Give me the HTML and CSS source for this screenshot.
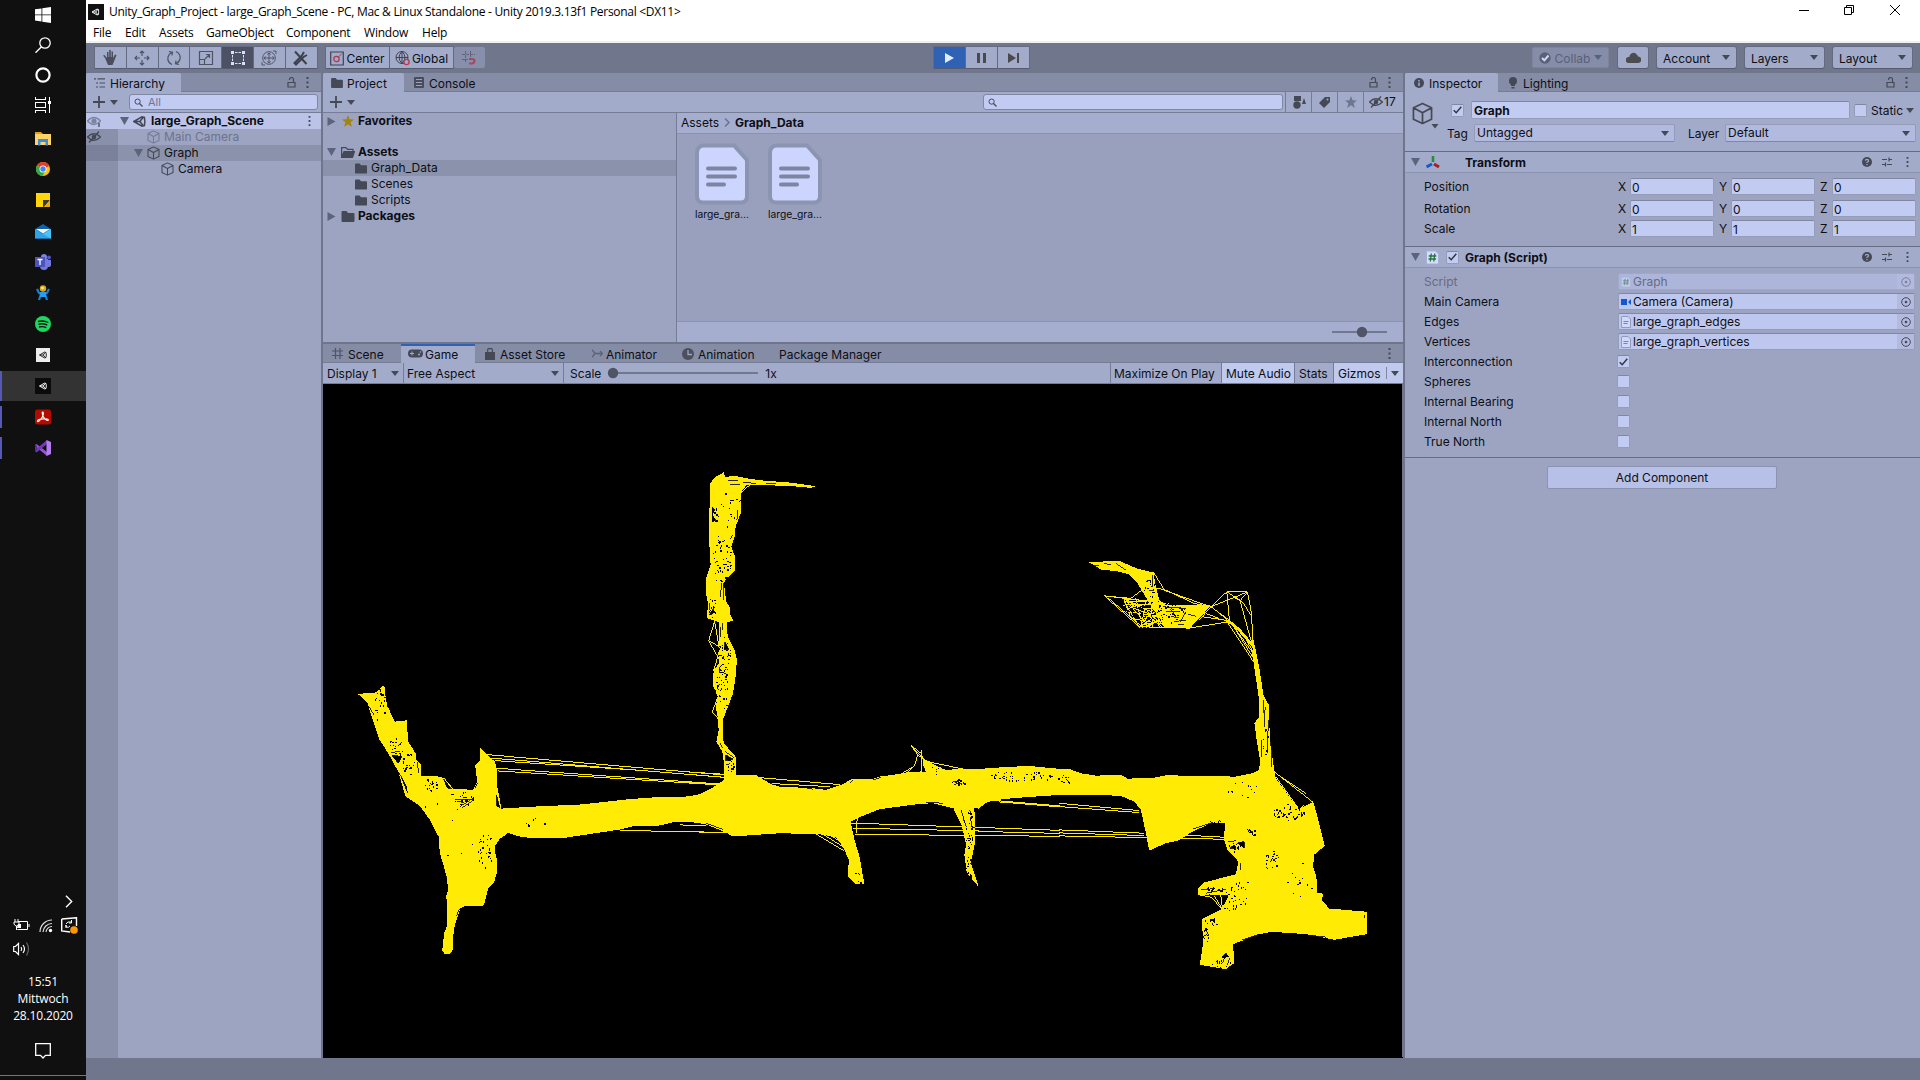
FILE: index.html
```html
<!DOCTYPE html>
<html lang="en">
<head>
<meta charset="utf-8">
<title>Unity_Graph_Project</title>
<link rel="stylesheet" href="styles.css">
</head>
<body>
<svg class="defs" width="0" height="0">
  <symbol id="unity" viewBox="0 0 16 16"><path d="M1 8 11 2.2 14 3 14.6 8 14 13 11 13.8ZM8.5 8H1.5M8.5 8 12.8 2.5M8.5 8 12.8 13.5" fill="none" stroke="currentColor" stroke-width="1.9"/></symbol>
  <symbol id="cube" viewBox="0 0 16 16"><path d="M8 1 14.3 4V12L8 15 1.7 12V4ZM1.7 4 8 7.5 14.3 4M8 7.5V15" fill="none" stroke="currentColor" stroke-width="1.2" stroke-linejoin="round"/></symbol>
  <symbol id="folder" viewBox="0 0 13 11"><path d="M0 1Q0 0 1 0H5L6.5 2H12Q13 2 13 3V10Q13 11 12 11H1Q0 11 0 10Z" fill="currentColor"/></symbol>
  <symbol id="lock" viewBox="0 0 9 11"><path d="M1 5.5H8V10H1ZM2.5 3V2.5A2 2 0 0 1 6.5 2.5V5.5" fill="none" stroke="currentColor" stroke-width="1.2"/></symbol>
  <symbol id="dots" viewBox="0 0 3 11"><path d="M.5 0h2v2h-2zM.5 4.5h2v2h-2zM.5 9h2v2h-2z" fill="currentColor"/></symbol>
  <symbol id="down" viewBox="0 0 8 5"><path d="M0 0H8L4 5Z" fill="currentColor"/></symbol>
  <symbol id="open" viewBox="0 0 9 8"><path d="M0 0H9L4.5 8Z" fill="currentColor"/></symbol>
  <symbol id="shut" viewBox="0 0 8 9"><path d="M0 0V9L8 4.5Z" fill="currentColor"/></symbol>
  <symbol id="plus" viewBox="0 0 12 12"><path d="M6 0V12M0 6H12" stroke="currentColor" stroke-width="1.8"/></symbol>
  <symbol id="mag" viewBox="0 0 9 9"><path d="M5.5 5.5 8.5 8.5" stroke="currentColor" stroke-width="1.3"/><circle cx="3.6" cy="3.6" r="2.6" fill="none" stroke="currentColor"/></symbol>
  <symbol id="star" viewBox="0 0 12 12"><path d="M6 0 7.6 4.2 12 4.5 8.6 7.3 9.8 12 6 9.3 2.2 12 3.4 7.3 0 4.5 4.4 4.2Z" fill="currentColor"/></symbol>
  <symbol id="eyeoff" viewBox="0 0 14 12"><path d="M.5 6Q7 -.5 13.500 6Q7 12.500 .5 6ZM12 .5 2 11.500" fill="none" stroke="currentColor" stroke-width="1.3"/><circle cx="7" cy="6" r="2.3" fill="currentColor"/></symbol>
  <symbol id="help" viewBox="0 0 10 10"><circle cx="5" cy="5" r="5" fill="currentColor"/><path d="M3.400 3.800Q3.500 2.300 5 2.300T6.600 3.700Q6.500 4.700 5 5.300V6.100M5 7V8.200" fill="none" stroke="#a3abcb" stroke-width="1.200"/></symbol>
  <symbol id="preset" viewBox="0 0 10 10"><path d="M0 2.500H5M7 2.500H10M7 .5V4.500M0 7.500H3M5 7.500H10M3.500 5.500V9.500" stroke="currentColor" stroke-width="1.200" fill="none"/></symbol>
  <symbol id="check" viewBox="0 0 9 8"><path d="M.7 4.200 3.200 6.700 8.300 .8" fill="none" stroke="#32363f" stroke-width="1.500"/></symbol>
  <symbol id="target" viewBox="0 0 10 10"><circle cx="5" cy="5" r="4.300" fill="none" stroke="currentColor"/><circle cx="5" cy="5" r="1.300" fill="currentColor"/></symbol>
  <symbol id="page" viewBox="0 0 10 12"><path d="M1 .5H7L9.500 3V11.500H.5V1Z" fill="#d0d8fb" stroke="#929bb9"/><path d="M2.500 5.500H7.500M2.500 7.500H6.500" stroke="#7d85a2"/></symbol>
  <symbol id="bigpage" viewBox="0 0 54 62"><path d="M9 2.500H39L52 17V53Q52 59.500 46 59.500H8Q2 59.500 2 53V10Q2 2.500 9 2.500Z" fill="#ccd5fd" stroke="#8b94b0" stroke-width="4"/><path d="M13 25.500H40M13 33.500H40M13 41.500H29" stroke="#7d85a3" stroke-width="4" stroke-linecap="round"/></symbol>
  <symbol id="script" viewBox="0 0 13 14"><path d="M1 .5H9.500L12.500 3.500V13.500H.5V1Z" fill="#d4ddff" stroke="#a7b0d2"/><path d="M5.300 3 4.300 11M8.800 3 7.800 11M2.700 5.500H10.300M2.500 8.500H10" stroke="#27733a" stroke-width="1.300"/></symbol>
</svg>

<div class="desktop">
<aside class="taskbar">
  <div class="apps">
    <div class="app first"><svg width="16" height="16"><path d="M0 2.300 6.500 1.400V7.500H0ZM7.300 1.200 16 0V7.500H7.300ZM0 8.300H6.500V14.500L0 13.600ZM7.300 8.300H16V16L7.300 14.700Z" fill="#fff"/></svg></div>
    <div class="app"><svg width="16" height="16"><circle cx="10" cy="6" r="5.200" fill="none" stroke="#fff" stroke-width="1.300"/><path d="M6.500 9.800 .5 15.700" stroke="#fff" stroke-width="1.400"/></svg></div>
    <div class="app cortana"><svg width="16" height="16"><circle cx="8" cy="8" r="6.600" fill="none" stroke="#fff" stroke-width="2.200"/></svg></div>
    <div class="app taskview"><svg width="16" height="16" shape-rendering="crispEdges"><path d="M.5 0V2.500H10.500V0M.5 16V13.500H10.500V16M.5 5.500H10.500V10.500H.5ZM14.500 0V16" fill="none" stroke="#fff"/><path d="M13 4h3v3h-3z" fill="#fff"/></svg></div>
    <div class="app"><svg width="16" height="16"><path d="M0 2H6L8 4H15V8H0Z" fill="#e0a010"/><path d="M0 4H16V15H0Z" fill="#ffd366"/><path d="M3 9H13V15.500H10.500V12H5.500V15.500H3Z" fill="#3b8ede"/></svg></div>
    <div class="app"><svg width="16" height="16"><circle cx="8" cy="8" r="7" fill="#fbc116"/><path d="M8 8 1.900 4.600A7 7 0 0 1 14.300 5Z" fill="#e33b2e"/><path d="M8 8 1.900 4.600A7 7 0 0 0 7.500 15L10.500 9.500Z" fill="#2da94f"/><circle cx="8" cy="8" r="3.500" fill="#fff"/><circle cx="8" cy="8" r="2.700" fill="#4284f3"/></svg></div>
    <div class="app"><svg width="14" height="14"><path d="M0 0H14V14H0Z" fill="#ffd60a"/><path d="M7 7H14L8 14H7Z" fill="#3a3a3a"/><path d="M14 7V14H8Z" fill="#e9a90c"/></svg></div>
    <div class="app"><svg width="16" height="16"><path d="M0 6 8 1 16 6V15.500H0Z" fill="#1062ae"/><path d="M0 6 8 11 16 6V15.500H0Z" fill="#2ea3e8"/><path d="M16 6V15.500L8 11Z" fill="#45c6f5"/><path d="M1 6H15L8 10.500Z" fill="#f4f6f8"/></svg></div>
    <div class="app"><svg width="16" height="16"><circle cx="9" cy="3" r="3" fill="#7b83eb"/><circle cx="14" cy="3.500" r="1.900" fill="#5059c9"/><path d="M5 5H13V12Q13 16 9 16T5 12ZM13 6H16V11Q16 13 13 13Z" fill="#7479dc"/><rect y="3" width="10" height="10" fill="#4b53bc"/><path d="M2.500 5.500H7.500M5 5.500V11" stroke="#fff" stroke-width="1.300"/></svg></div>
    <div class="app"><svg width="16" height="16"><path d="M2 4 4 8 6 9 4 15M14 4 12 8 10 9 12 15" fill="none" stroke="#1581dc" stroke-width="2.200"/><path d="M5 7H11V12H5Z" fill="#2a9df2"/><circle cx="8" cy="3.500" r="3.200" fill="#dda812"/><circle cx="7.500" cy="3" r="1.300" fill="#ffed9b"/></svg></div>
    <div class="app"><svg width="16" height="16"><circle cx="8" cy="8" r="8" fill="#1ed760"/><path d="M3 5.500Q8.500 4 13.300 6.500M3.500 8.300Q8 7 12.300 9.200M4 11Q8 10 11.300 11.700" fill="none" stroke="#111" stroke-width="1.400"/></svg></div>
    <div class="app"><svg width="14" height="14"><rect width="14" height="14" fill="#eee"/><use href="#unity" x="3" y="3" width="8" height="8" color="#222"/></svg></div>
    <div class="app current running"><svg width="16" height="16"><rect width="16" height="16" fill="#0b0b0b"/><use href="#unity" x="4" y="4" width="8" height="8" color="#fff"/></svg></div>
    <div class="app running"><svg width="16" height="16"><rect y=".5" width="16" height="15" rx="2.500" fill="#b30b00"/><path d="M7.500 3Q9 3 8 6.500 7 10 3.500 12.500 2 13 2.500 11.500 4 9.500 12 10 14 10.500 13 11.500 11 12 8.500 8 6.500 4 7.500 3Z" fill="none" stroke="#fff" stroke-width="1.100"/></svg></div>
    <div class="app running"><svg width="16" height="16"><path d="M0 5 1.500 4 12 12V16L0 6Z" fill="#9454d4"/><path d="M0 11 1.500 12.500 12 4V0L0 10Z" fill="#7338b5"/><path d="M0 4.500 2 5.500V10.500L0 11.500Z" fill="#5c2d91"/><path d="M11.500 0 16 2V14L11.500 16Z" fill="#b37cf0"/></svg></div>
  </div>
  <div class="tray">
    <div class="tray-row more"><svg width="8" height="13"><path d="M1 .7 6.700 6.500 1 12.300" fill="none" stroke="#fff" stroke-width="1.400"/></svg></div>
    <div class="tray-row status">
      <svg width="17" height="13"><path d="M5 2.500H14.500V10.500H4.500M16 5V8M2 0V3M5 0V3M1 3H6V5Q5 7 3.500 7T1 5ZM3.500 7V11" fill="none" stroke="#fff"/><path d="M5 5H8V9H4Z" fill="#fff"/></svg>
      <svg width="14" height="14"><path d="M1 13A12 12 0 0 1 13 1M4 13A9 9 0 0 1 13 4.500M7 13A6 6 0 0 1 13 7.500" fill="none" stroke="#ddd" stroke-width="1.200"/><circle cx="11.500" cy="11.500" r="1.700" fill="#fff"/></svg>
      <svg width="17" height="17"><path d="M.7 2 15.500 .7V9M.7 2V14L9 15" fill="none" stroke="#fff" stroke-width="1.400"/><path d="M5 7Q6 4 10.500 5M10.500 3V6H8M9 9Q8 11 5 10V8M5 11V8" fill="none" stroke="#fff"/><circle cx="13" cy="13" r="3.800" fill="#f90"/></svg>
    </div>
    <div class="tray-row sound"><svg width="17" height="14"><path d="M.7 4.500H2.500L5.500 1.500V12.500L2.500 9.500H.7ZM8 5Q9.500 7 8 9M10 3Q13 7 10 11" fill="none" stroke="#fff" stroke-width="1.200"/><path d="M13.500 .5Q17.500 7 13.500 13.500" fill="none" stroke="#666" stroke-width="1.200"/></svg></div>
    <div class="clock"><div>15:51</div><div>Mittwoch</div><div>28.10.2020</div></div>
    <div class="notify"><svg width="16" height="16"><path d="M.7 .7H15.300V12.300H10.500L8 15 5.500 12.300H.7Z" fill="none" stroke="#fff" stroke-width="1.300"/></svg></div>
    <div class="show-desktop"></div>
  </div>
</aside>

<main class="window">
  <header class="titlebar">
    <svg class="appicon" width="16" height="16"><rect width="16" height="16" fill="#111"/><use href="#unity" x="3.500" y="4" width="8" height="8" color="#fff"/></svg>
    <span class="title">Unity_Graph_Project - large_Graph_Scene - PC, Mac &amp; Linux Standalone - Unity 2019.3.13f1 Personal &lt;DX11&gt;</span>
    <svg class="winbtns" width="104" height="12"><path d="M1 6.500H11" stroke="#000" fill="none"/><path d="M46.500 3.500H53.500V10.500H46.500ZM48.500 3V1.500H55.500V8.500H54" stroke="#000" fill="none"/><path d="M92 1 102 11M102 1 92 11" stroke="#000" fill="none"/></svg>
  </header>
  <nav class="menubar"><span class="m1">File</span><span class="m2">Edit</span><span class="m3">Assets</span><span class="m4">GameObject</span><span class="m5">Component</span><span class="m6">Window</span><span>Help</span></nav>

  <div class="toolbar">
    <div class="group tools">
      <div class="tbtn"><svg width="16" height="16"><path d="M3 8 1 5.500 2.500 5 5 8V2H6.500V7H7.200V0H8.800V7H9.500V1.500H11V8L13 4.500 14.500 5 12 11.500 10.500 15H6Z" fill="#4a4e5a"/></svg></div>
      <div class="tbtn"><svg width="16" height="16"><path d="M8 1V6M8 10V15M1 8H6M10 8H15M6 3 8 1 10 3M6 13 8 15 10 13M3 6 1 8 3 10M13 6 15 8 13 10" fill="none" stroke="#4f5463" stroke-width="1.200"/></svg></div>
      <div class="tbtn"><svg width="16" height="16"><path d="M6 14.500Q1 12 2 7 3 3.500 6 2.500M3 1.500 6.500 2.300 6 5.500M10 1.500Q15 4 14 9 13 12.500 10 13.500M13 14.500 9.500 13.700 10 10.500" fill="none" stroke="#4f5463" stroke-width="1.200"/></svg></div>
      <div class="tbtn"><svg width="16" height="16"><path d="M1.500 1.500H14.500V14.500H1.500ZM1.500 9.500H6.500V14.500M7 9 11.500 4.500M8 4.500H11.500V8" fill="none" stroke="#4f5463" stroke-width="1.200"/></svg></div>
      <div class="tbtn pressed"><svg width="16" height="16"><path d="M1 1h3v3H1zM12 1h3v3h-3zM1 12h3v3H1zM12 12h3v3h-3z" fill="#d9e0fc"/><path d="M5 2.500H11M5 13.500H11M2.500 5V11M13.500 5V11" stroke="#d9e0fc" stroke-dasharray="2.500 1"/></svg></div>
      <div class="tbtn"><svg width="16" height="16"><circle cx="8" cy="8" r="6.300" fill="none" stroke="#4f5463"/><path d="M8 3V13M3 8H13M6.300 4.500 8 3 9.700 4.500M6.300 11.500 8 13 9.700 11.500M4.500 6.300 3 8 4.500 9.700M11.500 6.300 13 8 11.500 9.700M12 1H15V4M1 12V15H4" fill="none" stroke="#4f5463"/></svg></div>
      <div class="tbtn"><svg width="16" height="16"><path d="M2 1.500 13.500 14M14 5 10.500 7 3 14.500 1.500 13 9 5.500 11 2" fill="none" stroke="#3d414c" stroke-width="2"/></svg></div>
    </div>
    <div class="group pivot">
      <div class="tbtn label"><svg width="14" height="16"><path d="M.7 2H13.300V15H.7Z" fill="none" stroke="#3f4350" stroke-width="1.200"/><circle cx="6.500" cy="9" r="2.700" fill="none" stroke="#b33a52" stroke-width="1.300"/><path d="M8 7.500 12 3.500" stroke="#b33a52"/></svg><span>Center</span></div>
      <div class="tbtn label"><svg width="15" height="16"><circle cx="7" cy="7.500" r="6" fill="none" stroke="#3f4350"/><path d="M7 1.500V13.500M1 7.500H13M7 1.500Q1 7.500 7 13.500M7 1.500Q13 7.500 7 13.500" fill="none" stroke="#3f4350"/><circle cx="11.500" cy="12" r="2.600" fill="#a3abcb" stroke="#b33a52" stroke-width="1.300"/></svg><span>Global</span></div>
    </div>
    <div class="tbtn snap"><svg width="16" height="16"><path d="M4.500 1V12M9.500 1V7M1 4.500H14M1 9.500H7" fill="none" stroke="#5f647c" stroke-dasharray="3 1"/><path d="M8 9H11Q13.500 9 13.500 11T11 13.500H8" fill="none" stroke="#a64a63" stroke-width="2.200"/></svg></div>
    <div class="group play">
      <div class="tbtn on"><svg width="9" height="10"><path d="M0 0V10L9 5Z" fill="#e4eaff"/></svg></div>
      <div class="tbtn"><svg width="9" height="10"><path d="M0 0h3v10H0zM6 0h3v10H6z" fill="#4a4a4e"/></svg></div>
      <div class="tbtn"><svg width="11" height="10"><path d="M0 0V10L8 5ZM9 0h2v10H9z" fill="#4a4a4e"/></svg></div>
    </div>
    <div class="group account">
      <div class="tbtn collab"><svg width="12" height="12"><circle cx="6" cy="6" r="5.700" fill="#5a6077"/><path d="M3 6 5.300 8.300 9.500 3.500" fill="none" stroke="#cfd7fa" stroke-width="2"/></svg><span>Collab</span><svg width="8" height="5"><use href="#down"/></svg></div>
      <div class="tbtn cloud"><svg width="15" height="11"><path d="M3 11A3 3 0 0 1 2.500 5Q3.500 5 3.500 4.500A4 4 0 0 1 11 3Q12 3 12 4.500A3 3 0 0 1 12 11Z" fill="#4b4c50"/></svg></div>
      <div class="tbtn drop"><span>Account</span><svg width="8" height="5"><use href="#down"/></svg></div>
      <div class="tbtn drop"><span>Layers</span><svg width="8" height="5"><use href="#down"/></svg></div>
      <div class="tbtn drop"><span>Layout</span><svg width="8" height="5"><use href="#down"/></svg></div>
    </div>
  </div>

  <div class="workspace">
    <section class="hierarchy">
      <div class="tabs">
        <div class="tab active"><svg width="12" height="10"><path d="M0 .8H2M3.500 .8H11M2 5H4M5.500 5H11M2 9H4M5.500 9H11" stroke="#4b4f5e" stroke-width="1.200"/></svg><span>Hierarchy</span></div>
        <div class="tabtools"><svg width="9" height="11"><use href="#lock"/></svg><svg width="3" height="11"><use href="#dots"/></svg></div>
      </div>
      <div class="bar"><svg width="12" height="12"><use href="#plus"/></svg><svg class="caret" width="8" height="5"><use href="#down"/></svg>
        <div class="search"><svg width="9" height="9"><use href="#mag"/></svg><span>All</span></div></div>
      <div class="tree">
        <div class="trow scene"><div class="vis"><svg width="14" height="12"><path d="M.5 6Q7 -1 13.500 6Q7 13 .5 6Z" fill="none" stroke="#7c849f" stroke-width="1.300"/><circle cx="7" cy="6" r="2.600" fill="#7c849f"/><path d="M11 8h2v4h-2z" fill="#6a718a"/></svg></div><svg class="ar" width="9" height="8"><use href="#open"/></svg><svg class="ic" width="13" height="13"><use href="#unity"/></svg><b>large_Graph_Scene</b><svg class="rowdots" width="3" height="10"><use href="#dots"/></svg></div>
        <div class="trow off"><div class="vis"><svg width="14" height="12"><use href="#eyeoff"/></svg></div><svg class="cu1" width="15" height="14"><use href="#cube"/></svg><span>Main Camera</span></div>
        <div class="trow sel"><div class="vis"></div><svg class="ar2" width="9" height="8"><use href="#open"/></svg><svg class="cu" width="15" height="14"><use href="#cube"/></svg><span>Graph</span></div>
        <div class="trow"><div class="vis"></div><svg class="cu2" width="15" height="14"><use href="#cube"/></svg><span>Camera</span></div>
        <div class="rest"><div class="vis"></div></div>
      </div>
    </section>

    <div class="center">
      <section class="project">
        <div class="tabs">
          <div class="tab active pj"><svg width="12" height="10"><use href="#folder"/></svg><span>Project</span></div>
          <div class="tab cons"><svg width="10" height="11"><rect width="10" height="11" rx="1" fill="#484c5b"/><path d="M2 2.500H8M2 5.500H8M2 8.500H8" stroke="#9ba3c0"/></svg><span>Console</span></div>
          <div class="tabtools"><svg width="9" height="11"><use href="#lock"/></svg><svg width="3" height="11"><use href="#dots"/></svg></div>
        </div>
        <div class="bar"><svg width="12" height="12"><use href="#plus"/></svg><svg class="caret" width="8" height="5"><use href="#down"/></svg>
          <div class="search wide"><svg width="9" height="9"><use href="#mag"/></svg></div>
          <div class="cells">
            <div><svg width="14" height="13"><path d="M2 0h7v5H2zM10 8 14 8 12 2Z" fill="#454955"/><circle cx="5" cy="9" r="3.700" fill="#454955"/></svg></div>
            <div><svg width="11" height="11"><path d="M6 0H11V5L5 11 0 6Z" fill="#454955"/><circle cx="8.500" cy="2.500" r="1" fill="#a3abcb"/></svg></div>
            <div><svg class="grey" width="12" height="12"><use href="#star"/></svg></div>
            <div class="hid"><svg width="14" height="12"><use href="#eyeoff"/></svg><span>17</span></div>
          </div>
        </div>
        <div class="projbody">
          <div class="ptree">
            <div class="prow"><svg class="pa" width="8" height="9"><use href="#shut"/></svg><svg class="pi gold" width="12" height="12"><use href="#star"/></svg><b>Favorites</b></div>
            <div class="gap"></div>
            <div class="prow"><svg class="pa" width="9" height="8"><use href="#open"/></svg><svg class="pi" width="14" height="11"><path d="M.6 10V.6H5L6.500 2.300H12V4M.6 10 3 4.500H13.500L11.500 10.400H.6Z" fill="none" stroke="#454955" stroke-width="1.200"/><path d="M3 4.500H13.500L11.500 10.400H.6Z" fill="#454955"/></svg><b>Assets</b></div>
            <div class="prow kid sel"><svg width="12" height="11"><use href="#folder"/></svg><span>Graph_Data</span></div>
            <div class="prow kid"><svg width="12" height="11"><use href="#folder"/></svg><span>Scenes</span></div>
            <div class="prow kid"><svg width="12" height="11"><use href="#folder"/></svg><span>Scripts</span></div>
            <div class="prow"><svg class="pa" width="8" height="9"><use href="#shut"/></svg><svg class="pi" width="13" height="11"><use href="#folder"/></svg><b>Packages</b></div>
          </div>
          <div class="pfiles">
            <div class="crumb"><span>Assets</span><svg width="6" height="9"><path d="M1 .5 5 4.500 1 8.500" fill="none" stroke="#6b728c" stroke-width="1.500"/></svg><b>Graph_Data</b></div>
            <div class="files"><div class="file"><svg width="54" height="62"><use href="#bigpage"/></svg><span>large_gra...</span></div><div class="file"><svg width="54" height="62"><use href="#bigpage"/></svg><span>large_gra...</span></div></div>
            <div class="zoombar"><svg width="56" height="12"><path d="M0 6H55" stroke="#70778f" stroke-width="2"/><circle cx="30" cy="6" r="5.200" fill="#4f5466"/></svg></div>
          </div>
        </div>
      </section>

      <section class="game">
        <div class="tabs">
          <div class="tab t-scene"><svg width="11" height="11"><path d="M3.500 0V11M8 0V11M0 3H11M0 7.500H11" stroke="#4f5466" stroke-width="1.200"/></svg><span>Scene</span></div>
          <div class="tab active t-game"><svg width="15" height="9"><rect y=".5" width="15" height="8" rx="4" fill="#454955"/><path d="M2 4.500H6M4 2.500V6.500" stroke="#a3abcb"/><circle cx="11" cy="5.500" r="1" fill="#a3abcb"/><circle cx="12.500" cy="3" r=".8" fill="#a3abcb"/></svg><span>Game</span></div>
          <div class="tab t-store"><svg width="10" height="12"><path d="M0 4H10V12H0Z" fill="#454955"/><path d="M2.700 6V1.500Q2.700 .6 3.500 .6H6.500Q7.300 .6 7.300 1.500V6" fill="none" stroke="#454955" stroke-width="1.200"/></svg><span>Asset Store</span></div>
          <div class="tab t-animator"><svg width="11" height="9"><path d="M0 .7 3 4.500H10.500M0 8.300 3 4.500M8 2 10.500 4.500 8 7" fill="none" stroke="#5c6278" stroke-width="1.300"/></svg><span>Animator</span></div>
          <div class="tab t-anim"><svg width="12" height="12"><circle cx="6" cy="6" r="6" fill="#4b4f5e"/><path d="M6 2V6.500H10" fill="none" stroke="#9ba3c0" stroke-width="1.300"/></svg><span>Animation</span></div>
          <div class="tab t-pkg"><span>Package Manager</span></div>
          <div class="tabtools"><svg width="3" height="11"><use href="#dots"/></svg></div>
        </div>
        <div class="bar gbar">
          <div class="g1"><span>Display 1</span><svg width="8" height="5"><use href="#down"/></svg></div>
          <div class="g2"><span>Free Aspect</span><svg width="8" height="5"><use href="#down"/></svg></div>
          <div class="g3"><span>Scale</span><svg width="152" height="12"><path d="M6 6H151" stroke="#70778f" stroke-width="2"/><circle cx="6" cy="6" r="5.200" fill="#4f5466"/></svg><span>1x</span></div>
          <div class="g4"><span>Maximize On Play</span></div><div class="g5"><span>Mute Audio</span></div><div class="g6"><span>Stats</span></div>
          <div class="g7"><span>Gizmos</span><i></i><svg width="8" height="5"><use href="#down"/></svg></div>
        </div>
        <svg class="view" viewBox="323 384 1080 673" width="1080" height="673" shape-rendering="crispEdges">
          <g transform="translate(340 660) scale(.33333)">
            <path class="solid" d="M52 102 110 97 133 73 138 120 150 155 165 185 200 181 205 245 227 280 228 298 243 315 243 347 300 350 315 356 340 386 400 390 412 365 406 315 421 300 421 264 445 288 465 305 472 330 470 370 478 410 485 446 600 439 720 434 865 418 960 411 1045 410 1080 403 1115 385 1152 362 1152 347 1202 347 1202 527 1175 525 1140 510 1100 494 1040 484 1000 487 950 499 880 499 840 509 720 527 680 533 570 534 540 530 505 519 480 537 465 560 466 580 473 605 472 635 462 670 445 685 432 737 375 738 362 745 352 775 342 806 338 872 330 884 315 884 307 872 313 820 321 800 321 720 317 712 326 688 315 630 300 580 296 530 270 480 240 438 197 410 175 335 145 280 118 238 95 170 83 130 65 110Z"/>
            <path class="wire" d="M440 284 1152 345M450 294 1152 352M465 302 900 331M470 325 1140 372M475 333 1125 374M840 511 1000 515 1175 518"/>
            <path class="cut" d="M153 278 180 274M155 285 175 310 185 290ZM232 305 236 340M178 340 200 380 202 400M88 140 102 165M312 358 334 386 322 384ZM405 385 412 370M470 405 480 445 470 438ZM350 425 372 427M360 440 400 415M366 444 402 420M345 420 398 418M1005 488 1085 490M350 770 358 748M316 640 320 655"/>
          </g>
          <g transform="translate(680 450) scale(.33333)">
            <path class="solid" d="M133 66 136 82 160 76 200 84 240 90 330 97 410 108 395 113 340 108 240 104 200 105 183 128 183 190 168 230 165 260 155 290 167 322 167 362 140 385 133 400 140 455 152 475 150 490 162 512 142 516 144 560 165 600 172 628 168 680 160 730 145 770 131 806 129 860 133 880 168 920 170 976 230 976 245 985 270 1000 300 1010 400 1015 440 1020 490 1003 515 988 575 988 600 980 640 975 680 968 722 965 735 930 745 935 760 942 800 960 840 957 902 957 902 1072 885 1075 888 1170 875 1240 898 1312 862 1268 855 1215 860 1185 848 1130 822 1075 760 1060 720 1062 600 1078 540 1102 513 1115 525 1170 540 1220 555 1303 530 1303 505 1280 508 1230 490 1190 470 1162 420 1153 300 1150 200 1157 155 1157 120 1137 80 1120 40 1115 0 1115 0 1042 60 1035 90 1020 133 990 133 940 128 905 110 875 117 840 115 806 108 770 115 740 100 708 102 662 118 640 118 600 118 516 82 504 85 460 79 430 79 385 93 345 88 265 91 100 105 82Z"/>
            <path class="wire" d="M105 514 87 572 120 630M87 572 120 590M105 514 118 590M115 740 98 785 115 806M102 662 120 600M0 964 133 973M0 971 133 982M0 996 115 1003M230 982 480 1004M260 1000 450 1010M695 887 725 910 735 940M695 887 715 915 705 948 665 972M698 890 735 930M715 915 745 935 850 957M725 900 725 965M705 948 680 970M0 1145 160 1148M0 1125 80 1128M410 1153 492 1202M430 1153 490 1190M455 1158 500 1185M513 1120 620 1123 900 1133M520 1135 900 1143M525 1153 900 1157M533 1105 530 1150M210 105 183 128"/>
            <path class="cut" d="M145 92 175 92M150 102 182 102M190 96 230 100M260 101 290 101M98 170 104 180 98 195 108 210 98 215M174 180 172 210M152 265 160 255M126 400 122 440M133 400 131 450M88 495 102 475 100 490ZM90 460 88 480M124 530 124 560M128 520 128 540M136 575 148 598 134 598ZM120 650 118 670M136 905 162 922M138 915 160 927 138 932ZM122 880 130 895M138 945 150 942M728 940 738 965 728 965ZM822 996 845 992M825 1003 848 1000M845 1080 860 1130M850 1100 856 1120M872 1100 880 1140M870 1080 874 1090M380 1014 400 1018M270 1001 300 1007M510 1000 520 990M80 1120 130 1139M580 990 605 982M740 1057 790 1060"/>
          </g>
          <path class="solid" d="M979 769 1008 767 1030 766 1061 769V795L1030 797 1005 799 988 802 979 809Z"/>
          <path class="wire thin" d="M988 800 1061 806M1000 802 1061 807M979 827.500 1061 830.500M979 831.500 1061 833.500M979 835.500 1061 836.500"/>
          <g transform="translate(1060 540) scale(.33333)">
            <path class="solid" d="M0 687 30 687 65 700 110 707 185 705 205 716 280 714 320 706 530 710 580 700 600 690 603 660 594 610 586 550 600 530 600 480 583 365 574 320 593 350 600 380 613 465 629 495 632 590 645 690 650 715 720 810 763 788 775 830 797 918 765 945 762 980 772 1010 774 1058 793 1062 788 1080 810 1106 925 1116 925 1183 825 1200 740 1183 640 1176 600 1183 522 1213 525 1270 500 1288 422 1275 432 1210 428 1138 487 1108 510 1066 415 1064 415 1048 435 1028 530 1003 538 965 505 930 495 900 497 850 460 848 400 875 355 903 320 910 270 932 258 870 245 810 225 785 190 770 140 765 0 765Z"/>
            <path class="solid" d="M88 66 180 62 235 86 283 97 288 130 300 180 320 195 455 195 432 222 390 264 320 262 300 235 265 180 235 130 210 103 175 94 125 88Z"/>
            <path class="wire" d="M283 97 315 148 405 190 455 200M300 145 440 195M135 167 200 175 320 190M135 167 215 175 245 152 300 145M135 167 240 260 390 264 510 245M145 172 250 262M195 185 240 260 290 200M195 180 215 235 330 255M190 195 320 190M200 180 270 262 300 210M230 175 250 262 350 215M210 200 350 250M205 185 390 262M240 180 200 215 320 230M260 180 250 240 330 190M280 190 390 262M195 178 300 182M198 184 310 186M200 192 310 196M215 200 300 186M250 205 310 205M255 230 320 225M245 255 320 240M260 262 310 235M240 262 300 220M275 185 280 262M290 185 300 262M255 215 310 262M195 175 260 210 320 262M455 200 503 155 565 155 578 225 580 310M455 200 525 172 565 155M503 155 511 243 578 310M503 155 550 185 575 225M525 172 543 182 565 155M543 182 575 300M430 230 510 242M440 220 480 235M420 240 455 200 510 240 540 265 578 310M460 205 520 255 575 330M500 240 583 365M530 270 580 350M545 270 590 350M645 695 763 788M650 700 740 760M650 710 720 808 763 788M722 808 735 795M490 1108 455 1072 415 1064M490 1108 465 1068M490 1108 485 1066M490 1108 510 1066M0 790 240 812M0 800 240 818M0 870 255 880M0 879 255 887M0 888 495 898M365 885 495 892"/>
            <path class="thick" d="M505 240 540 270 580 315M440 200 390 262M579 300 592 360"/>
            <path class="cut" d="M660 720 745 785 722 800ZM310 200 380 205M320 215 360 215M335 230 360 232M385 222 410 228M345 245 380 240M355 252 375 255M335 208 345 222M365 245 380 215M270 150 285 152M279 105 279 140M105 75 120 77M135 70 155 74M170 70 200 90M612 480 612 520M618 500 616 560M627 540 626 640M606 600 606 650M635 600 638 680M508 905 530 903M535 910 555 905 556 925M512 925 525 915 532 925ZM640 955 650 965M565 870 582 875M425 1050 460 1047M440 1060 500 1048M488 1255 500 1240 510 1252M490 1270 498 1250M505 1275 512 1255M438 1165 450 1190M915 1125V1135M550 1200 600 1184M750 1186 800 1192M545 970 545 990M400 868 460 848"/>
          </g>
          <path class="cut" id="gaps"/>
        </svg>
      </section>
    </div>

    <section class="inspector">
      <div class="tabs">
        <div class="tab active t-insp"><svg width="10" height="10"><circle cx="5" cy="5" r="5" fill="#454955"/><path d="M5 2V3.500M5 4.500V8" stroke="#a3abcb" stroke-width="1.500"/></svg><span>Inspector</span></div>
        <div class="tab t-light"><svg width="8" height="12"><circle cx="4" cy="4" r="4" fill="#454955"/><path d="M2 6h4v3H2zM2.500 10h3v1.500h-3z" fill="#454955"/></svg><span>Lighting</span></div>
        <div class="tabtools"><svg width="9" height="11"><use href="#lock"/></svg><svg width="3" height="11"><use href="#dots"/></svg></div>
      </div>
      <div class="objhead">
        <svg class="bigcube" width="28" height="28"><use href="#cube" width="23" height="23" x="0" y="0"/><path d="M20.500 22H27.500L24 26.500Z" fill="#454955"/></svg>
        <div class="objrows">
          <div class="or1"><div class="cb"><svg width="9" height="8"><use href="#check"/></svg></div><div class="field name"><b>Graph</b></div><div class="cb"></div><span>Static</span><svg width="8" height="5"><use href="#down"/></svg></div>
          <div class="or2"><span class="tg">Tag</span><div class="dd d1"><span>Untagged</span><svg width="8" height="5"><use href="#down"/></svg></div><span class="ly">Layer</span><div class="dd d2"><span>Default</span><svg width="8" height="5"><use href="#down"/></svg></div></div>
        </div>
      </div>
      <div class="comphead"><svg class="fold" width="9" height="8"><use href="#open"/></svg><svg class="cicon" width="14" height="13"><path d="M7 0V6" stroke="#2a8a35" stroke-width="2.600"/><path d="M6 8 .5 11" stroke="#1559cf" stroke-width="3"/><path d="M8 8 13 11" stroke="#a81c24" stroke-width="3"/></svg><b class="trn">Transform</b><div class="ctools"><svg width="10" height="10"><use href="#help"/></svg><svg width="10" height="10"><use href="#preset"/></svg><svg width="3" height="10"><use href="#dots"/></svg></div></div>
      <div class="props transform">
        <div class="vec"><label>Position</label><span>X</span><div class="field">0</div><span>Y</span><div class="field">0</div><span>Z</span><div class="field">0</div></div>
        <div class="vec v2"><label>Rotation</label><span>X</span><div class="field">0</div><span>Y</span><div class="field">0</div><span>Z</span><div class="field">0</div></div>
        <div class="vec"><label>Scale</label><span>X</span><div class="field">1</div><span>Y</span><div class="field">1</div><span>Z</span><div class="field">1</div></div>
      </div>
      <div class="comphead"><svg class="fold" width="9" height="8"><use href="#open"/></svg><svg class="cicon" width="13" height="15"><use href="#script"/></svg><div class="cb"><svg width="9" height="8"><use href="#check"/></svg></div><b>Graph (Script)</b><div class="ctools"><svg width="10" height="10"><use href="#help"/></svg><svg width="10" height="10"><use href="#preset"/></svg><svg width="3" height="10"><use href="#dots"/></svg></div></div>
      <div class="props script">
        <div class="prop dim"><label>Script</label><div class="obj"><svg width="10" height="12"><use href="#script"/></svg><span>Graph</span><em><svg width="10" height="10"><use href="#target"/></svg></em></div></div>
        <div class="prop"><label>Main Camera</label><div class="obj"><svg width="10" height="12"><path d="M0 3h6v6H0zM7 6 10 3V9Z" fill="#1059cf"/></svg><span>Camera (Camera)</span><em><svg width="10" height="10"><use href="#target"/></svg></em></div></div>
        <div class="prop"><label>Edges</label><div class="obj"><svg width="10" height="12"><use href="#page"/></svg><span>large_graph_edges</span><em><svg width="10" height="10"><use href="#target"/></svg></em></div></div>
        <div class="prop"><label>Vertices</label><div class="obj"><svg width="10" height="12"><use href="#page"/></svg><span>large_graph_vertices</span><em><svg width="10" height="10"><use href="#target"/></svg></em></div></div>
        <div class="prop"><label>Interconnection</label><div class="cb"><svg width="9" height="8"><use href="#check"/></svg></div></div>
        <div class="prop"><label>Spheres</label><div class="cb"></div></div>
        <div class="prop"><label>Internal Bearing</label><div class="cb"></div></div>
        <div class="prop"><label>Internal North</label><div class="cb"></div></div>
        <div class="prop"><label>True North</label><div class="cb"></div></div>
      </div>
      <button class="add">Add Component</button>
    </section>
  </div>
  <footer class="statusbar"></footer>
</main>
</div>
<script src="mesh.js"></script>
</body>
</html>
```
FILE: mesh.js
```js
// Small gaps left open between the edges of the mesh: [x, y, radius x, radius y, count]
const clusters = [
  [380, 705, 7, 22, 28], [395, 748, 8, 10, 22], [408, 765, 7, 12, 20], [430, 786, 8, 8, 22],
  [464, 800, 10, 8, 16], [485, 850, 8, 18, 30], [455, 830, 35, 50, 14], [535, 822, 10, 7, 6],
  [715, 515, 3, 10, 14], [728, 510, 8, 20, 10], [722, 560, 10, 26, 50], [712, 608, 4, 12, 18],
  [724, 655, 7, 20, 38], [722, 690, 7, 20, 34], [732, 500, 8, 3, 6], [730, 765, 4, 7, 12],
  [858, 878, 5, 9, 10], [959, 782, 7, 3, 12], [970, 830, 4, 20, 34], [970, 868, 3, 12, 16],
  [935, 770, 12, 4, 8], [1020, 776, 35, 5, 46], [1066, 778, 8, 5, 14], [1166, 610, 24, 14, 60],
  [1140, 612, 14, 9, 26], [1150, 588, 6, 10, 18], [1240, 790, 20, 8, 12], [1290, 812, 16, 8, 46],
  [1272, 860, 8, 9, 26], [1252, 832, 5, 4, 12], [1237, 846, 8, 5, 16], [1240, 885, 10, 5, 10],
  [1232, 900, 16, 10, 24], [1214, 890, 10, 4, 16], [1222, 962, 10, 7, 18], [1212, 920, 9, 5, 12],
  [1207, 935, 3, 8, 12], [1266, 740, 3, 14, 10], [1300, 880, 14, 18, 12], [1212, 822, 10, 3, 10]
];
let seed = 7;
const rnd = () => (seed = (seed * 16807) % 2147483647) / 2147483647;
let d = '';
for (const [cx, cy, rx, ry, n] of clusters) {
  for (let i = 0; i < n; i++) {
    const a = rnd() * 6.283, r = Math.sqrt(rnd());
    const x = Math.round(cx + Math.cos(a) * r * rx), y = Math.round(cy + Math.sin(a) * r * ry);
    const w = rnd() < .25 ? 2 : 1, h = rnd() < .35 ? 2 : 1;
    d += `M${x} ${y}h${w}v${h}h-${w}z`;
  }
}
document.getElementById('gaps').setAttribute('d', d);
```
FILE: styles.css
```css
*{box-sizing:border-box}
body{margin:0;width:1920px;height:1080px;overflow:hidden;font:12px/16px Inter,sans-serif;color:#0d0f15;background:#9ca4c2}
svg{display:block;flex:none;color:#454955}
.defs{position:absolute}
b{font-weight:700}
span,b,label{white-space:nowrap}
svg.grey{color:#6f7690}
svg.gold{color:#a5830e}
.desktop{display:flex;width:1920px;height:1080px}
.taskbar{width:86px;height:1080px;background:#101010;display:flex;flex-direction:column;justify-content:space-between;flex:none}
.apps{display:flex;flex-direction:column;gap:1px}
.app{height:30px;display:flex;align-items:center;justify-content:center}
.app.first{height:29px}
.cortana{padding-bottom:2px}
.taskview{padding-bottom:4px}
.running{border-left:2px solid #5558b5;padding-right:2px;height:22px;margin:4px 0}
.current{background:#333;height:30px;margin:0}
.tray{color:#fff;font:12px/17px "Open Sans",sans-serif;text-align:center;height:187px}
.tray-row{display:flex;align-items:center;height:24px}
.more{height:17px;padding-left:65px}
.status{padding-left:13px;gap:10px;height:31px}
.status svg:nth-child(2){margin-left:-1px}
.status svg:last-child{margin-left:-2px}
.sound{padding-left:13px;height:17px;padding-bottom:2px}
.clock{margin-top:15px;letter-spacing:-.15px}
.notify{display:flex;justify-content:center;margin-top:19px}
.show-desktop{border-top:1px solid #777;margin-top:16px}
.window{width:1834px;height:1080px;display:flex;flex-direction:column}
.titlebar{height:24px;background:#fff;display:flex;align-items:center;padding-left:2px;color:#000;font:12px/24px "Open Sans",sans-serif;flex:none}
.appicon{margin-right:5px}
.title{letter-spacing:-.3px}
.winbtns{margin-left:auto;margin-right:18px;margin-top:-4px}
.menubar{height:19px;background:#fff;border-bottom:2px solid #f0f0f0;display:flex;gap:15px;padding-left:7px;color:#000;font:12px/17px "Open Sans",sans-serif;flex:none;letter-spacing:-.2px}
.menubar .m1{width:17px}.menubar .m2{width:19px}.menubar .m3{width:32px}.menubar .m4{width:65px}.menubar .m5{width:63px}.menubar .m6{width:43px}
.toolbar{height:30px;background:#70768b;padding:4px 8px 0 9px;display:flex;flex:none}
.group{display:flex;gap:1px}
.tools .tbtn{width:30.8px}
.tbtn{width:31px;height:21px;background:#a3abcb;box-shadow:0 1px 0 #555b70,0 0 0 1px #646a80;display:flex;align-items:center;justify-content:center;flex:none}
.tbtn span{position:relative;top:1px}
.pressed{background:#4c5263}
.pivot{margin-left:9.4px}
.pivot .tbtn{width:63px;gap:2px}
.snap{background:#878fab;margin-left:1px;box-shadow:none;border-radius:2px}
.play{margin-left:449px}
.play .on{background:#2f62b5}
.account{margin-left:auto;gap:9px}
.account .tbtn{border-radius:2px}
.collab{width:77px;background:#868da8;color:#5a6078;gap:4px;box-shadow:none;border:1px solid #7d849e}
.account .collab{background:#868da8}
.collab svg{color:#5a6078}
.cloud{width:30px}
.drop{width:79px;justify-content:space-between;padding:0 6px}
.workspace{height:985px;display:flex;gap:2px;background:#6f758b;flex:none}
.tabs{height:19px;background:#858ca6;display:flex;flex:none;border-bottom:1px solid #757c95}
.tab{display:flex;align-items:center;height:19px;margin-bottom:-1px}
.tab span{position:relative;top:1px}
.tab.active{background:#a3abcb;border-radius:2px 2px 0 0}
.tabtools{margin-left:auto;display:flex;align-items:center;gap:10px;padding-right:12px}
.bar{height:21px;background:#a3abcb;border-bottom:1px solid #757c95;display:flex;align-items:center;padding-left:7px;flex:none}
.caret{margin-left:5px}
.search{height:16px;background:#c2cbf1;border:1px solid #7f87a3;border-radius:3px;display:flex;align-items:center;padding-left:4px;gap:5px;color:#6e7592;margin-left:11px;width:189px}
.search span{font-size:11px}
.hierarchy{width:235px;background:#9ca4c2;display:flex;flex-direction:column}
.hierarchy .tab{width:95px;padding-left:8px;gap:4px}
.tree{display:flex;flex-direction:column;flex:1}
.trow{height:16px;display:flex;align-items:center}
.trow span,.trow b{margin-left:3px}
.vis{width:32px;height:16px;background:#8890aa;padding:2px 0 0 1px;flex:none}
.scene{background:#bbc4e8}
.scene .vis{background:#bbc4e8}
.ar{margin-left:2px;color:#5d637a}.ic{margin:0 2px 0 4px}
.rowdots{margin-left:auto;margin-right:10px}
.off span{color:#6c738e}.off>svg{color:#747b96}
.cu1{margin-left:28px}.cu2{margin-left:42px}.ar2{margin-left:16px;color:#5d637a}.cu{margin-left:3px}
.sel{background:#8b92ab}.sel .vis{background:#7b819b}
.rest{flex:1;display:flex}.rest .vis{height:auto}
.center{width:1080px;display:flex;flex-direction:column;gap:2px}
.project{height:269px;display:flex;flex-direction:column}
.pj{width:81px;padding-left:8px;gap:4px}
.cons{padding-left:10px;gap:5px}
.project .search{width:300px;margin:0 2px 0 auto;padding-left:4px}
.cells{display:flex;height:20px}
.cells>div{width:26px;border-left:1px solid #757c95;display:flex;align-items:center;justify-content:center}
.cells .hid{width:40px;justify-content:flex-start;padding-left:5px;gap:1px}
.projbody{flex:1;display:flex}
.ptree{width:353px;background:#9ca4c2}
.prow{height:16px;display:flex;align-items:center}
.pa{margin-left:4px;width:9px;color:#5d637a}
.pi{margin-left:5px;width:14px;margin-right:3px}
.gap{height:15px}
.kid{padding-left:32px;gap:4px}
.pfiles{flex:1;background:#99a0be;border-left:1px solid #757c95;display:flex;flex-direction:column}
.crumb{height:21px;background:#a6aecf;border-bottom:1px solid #8b92af;display:flex;align-items:center;padding:0 0 1px 4px;gap:5px}
.files{display:flex;gap:19px;padding:9px 0 0 18px;flex:1}
.file{width:54px;font-size:10.300px;line-height:14px}
.file span{display:block;margin:2px -3px 0 -3px;text-align:center}
.zoombar{height:21px;background:#a6aecf;border-top:1px solid #8b92af;display:flex;align-items:center;justify-content:flex-end;padding-right:15px}
.game{flex:1;display:flex;flex-direction:column;background:#000}
.t-scene{padding-left:9px;gap:5px;width:78px}
.t-game{width:74px;padding-left:7px;gap:2px}
.tab.active.t-game{box-shadow:inset 0 2px #2f62b5;border-radius:0}
.t-store{padding-left:10px;gap:5px;width:108px}
.t-animator{padding-left:9px;gap:3px;width:90px}
.t-anim{padding-left:9px;gap:4px;width:96px}
.t-pkg{padding-left:10px}
.gbar{padding:0}
.gbar>div{height:20px;line-height:20px;display:flex;align-items:center;border-right:1px solid #757c95;flex:none}
.gbar span{position:relative;top:1px}
.g1{width:81px;padding:0 4px;justify-content:space-between}
.g2{width:160px;padding:0 4px 0 3px;justify-content:space-between}
.g3{width:547px;padding-left:6px;gap:6px}
.g4{width:111px;padding-left:3px}.g5{width:73px;padding-left:4px;background:#c0c9ee}
.g6{width:39px;padding-left:4px}
.gbar .g7{width:69px;padding-left:4px;background:#c0c9ee;border:0}
.g7 i{width:1px;height:12px;background:#7f87a3;margin:0 4px 0 5px}
.view{background:#000;border-right:1px solid #6f758b}
.solid{fill:#ffeb04}
.wire{fill:none;stroke:#ffeb04;stroke-width:3}
.thin{stroke-width:1}
.thick{fill:none;stroke:#ffeb04;stroke-width:8}
.cut{fill:#000;stroke:#000;stroke-width:2.500}
#gaps{stroke:none}
.inspector{width:515px;background:#9ca4c2;display:flex;flex-direction:column}
.t-insp{width:93px;padding-left:9px;gap:5px}
.t-light{padding-left:11px;gap:6px}
.objhead{height:59px;background:#a3abcb;display:flex;padding:9px 5px 0 6px;flex:none}
.bigcube{margin-top:1px}
.objrows{flex:1;margin-left:8px}
.or1{display:flex;align-items:center;height:18px;padding-left:4px}
.cb{width:13px;height:13px;background:#c2cbf1;border:1px solid #949cba;border-top-color:#7f87a3;border-radius:2px;display:flex;align-items:center;justify-content:center;flex:none}
.field{height:17px;background:#c2cbf1;border:1px solid #949cba;border-top-color:#7f87a3;border-radius:2px;padding-left:1px;line-height:17px}
.name{width:379px;height:18px;margin:0 4px 0 7px;padding-left:2px}
.or1 span{margin:1px 3px 0 4px}
.or2{display:flex;align-items:center;height:18px;margin-top:5px}
.dd{height:18px;background:#b2bae0;border:1px solid #939bb9;border-bottom-color:#7f87a3;border-radius:2px;display:flex;align-items:center;justify-content:space-between;padding:0 5px 0 2px}
.tg{width:27px;margin-top:2px}.d1{width:201px}.ly{width:50px;padding-left:13px;margin-top:2px}.d2{width:191px}
.comphead{height:22px;background:#a3abcb;border-top:1px solid #666c84;border-bottom:1px solid #8b93b0;display:flex;align-items:center;padding:0 11px 0 6px;flex:none}
.fold{color:#5d637a}.cicon{margin:0 7px 0 6px}
.comphead .cb{margin-right:6px}
.comphead b{position:relative;top:1px}
.comphead .trn{margin-left:18px}
.ctools{display:flex;gap:10px;margin-left:auto}
.ctools svg:last-child{margin-left:4px}
.transform{height:73px;padding-top:5px;flex:none}
.vec{display:flex;align-items:center;height:17px;padding-left:19px}
.vec label{width:194px}
.vec>span{width:12px}
.vec .field{width:84px}
.vec .field+span{width:17px;padding-left:5px}
.vec{margin-bottom:3px}
.transform .vec:first-child{margin-bottom:5px}
.script{height:190px;padding-top:5px;border-bottom:1px solid #666c84;flex:none}
.prop{display:flex;height:17px;margin-bottom:3px;padding-left:19px}
.prop label{width:194px;padding-top:1px}
.prop .cb{margin-top:2px;margin-left:-1px}
.obj{width:297px;height:17px;background:#bec7ed;border:1px solid #949cba;border-top-color:#7f87a3;border-radius:2px;display:flex;align-items:center;padding-left:2px}
.obj span{margin-left:2px}
.obj em{margin-left:auto;width:17px;height:15px;background:#b2bae0;display:flex;align-items:center;justify-content:center}
.dim label,.dim .obj span{color:#656b83}
.dim .obj{background:#adb5da;border-color:#a0a8c8}
.dim svg{opacity:.5}
.add{width:230px;height:23px;margin:8px 0 0 142px;background:#b7c0e6;border:1px solid #8b93b0;border-radius:2px;font:12px Inter,sans-serif;color:#0d0f15;flex:none}
.statusbar{flex:1;background:#70768b}
```
